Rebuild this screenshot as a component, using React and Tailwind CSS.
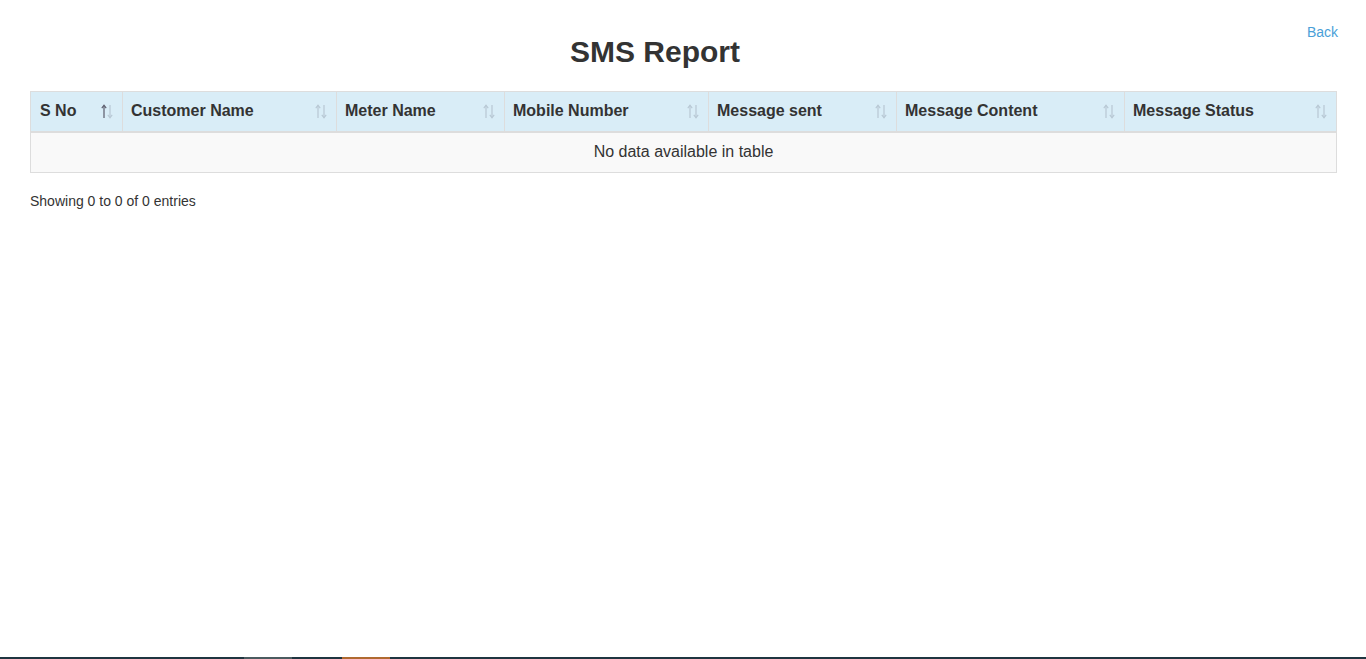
import React from 'react'

const columns = [
  { label: 'S No', width: 92, active: true },
  { label: 'Customer Name', width: 214 },
  { label: 'Meter Name', width: 168 },
  { label: 'Mobile Number', width: 204 },
  { label: 'Message sent', width: 188 },
  { label: 'Message Content', width: 228 },
  { label: 'Message Status', width: 212 },
]

// DataTables-style up/down sort glyph
function SortIcon({ active }) {
  const up = active ? '#5a5a6a' : '#b7c7d3'
  const down = '#b7c7d3'
  return (
    <svg width="12" height="15" viewBox="0 0 12 15" className="shrink-0">
      <path d="M3 14V2" stroke={up} strokeWidth="1.2" />
      <path d="M0.8 4.2L3 1.2L5.2 4.2" stroke={up} strokeWidth="1.1" fill="none" />
      <path d="M9 1v12" stroke={down} strokeWidth="1.2" />
      <path d="M6.8 10.8L9 13.8L11.2 10.8" stroke={down} strokeWidth="1.1" fill="none" />
    </svg>
  )
}

export default function App() {
  return (
    <div className="min-h-[659px] bg-white flex flex-col text-[#333]" style={{ fontFamily: '"Liberation Sans", Arial, sans-serif' }}>
      <div className="flex items-start">
        <h1 className="flex-1 text-center text-[30px] leading-[33px] font-bold pt-[35px] pl-[3px]">SMS Report</h1>
        <a href="#" className="w-[59px] pr-[28px] pt-[22px] text-[14px] leading-[20px] text-[#4a9fd8] text-right">Back</a>
      </div>

      <div className="pl-[30px] pr-[31px] pt-[23px] flex-1">
        <table className="w-full border-collapse border border-[#dddddd] table-fixed">
          <colgroup>
            {columns.map(c => <col key={c.label} style={{ width: c.width }} />)}
          </colgroup>
          <thead>
            <tr className="bg-[#d9edf7]">
              {columns.map((c, i) => (
                <th key={c.label} className={`border-r border-[#dddddd] border-b-2 border-b-[#dddddd] pr-[9px] h-[40px] text-left text-[16px] font-bold leading-[20px] ${i === 0 ? 'pl-[9px]' : 'pl-[8px]'}`}>
                  <div className="flex items-center justify-between">
                    <span>{c.label}</span>
                    <SortIcon active={c.active} />
                  </div>
                </th>
              ))}
            </tr>
          </thead>
          <tbody>
            <tr className="bg-[#f9f9f9]">
              <td colSpan={7} className="h-[41px] text-center text-[16px] leading-[20px]">No data available in table</td>
            </tr>
          </tbody>
        </table>
        <div className="pt-[18px] text-[14px] leading-[20px]">Showing 0 to 0 of 0 entries</div>
      </div>

      <div className="h-[2px] bg-[#1f3540] flex">
        <div className="w-[244px]" />
        <div className="w-[48px] bg-[#4b5b60]" />
        <div className="w-[50px]" />
        <div className="w-[48px] bg-[#b06a30]" />
      </div>
    </div>
  )
}
